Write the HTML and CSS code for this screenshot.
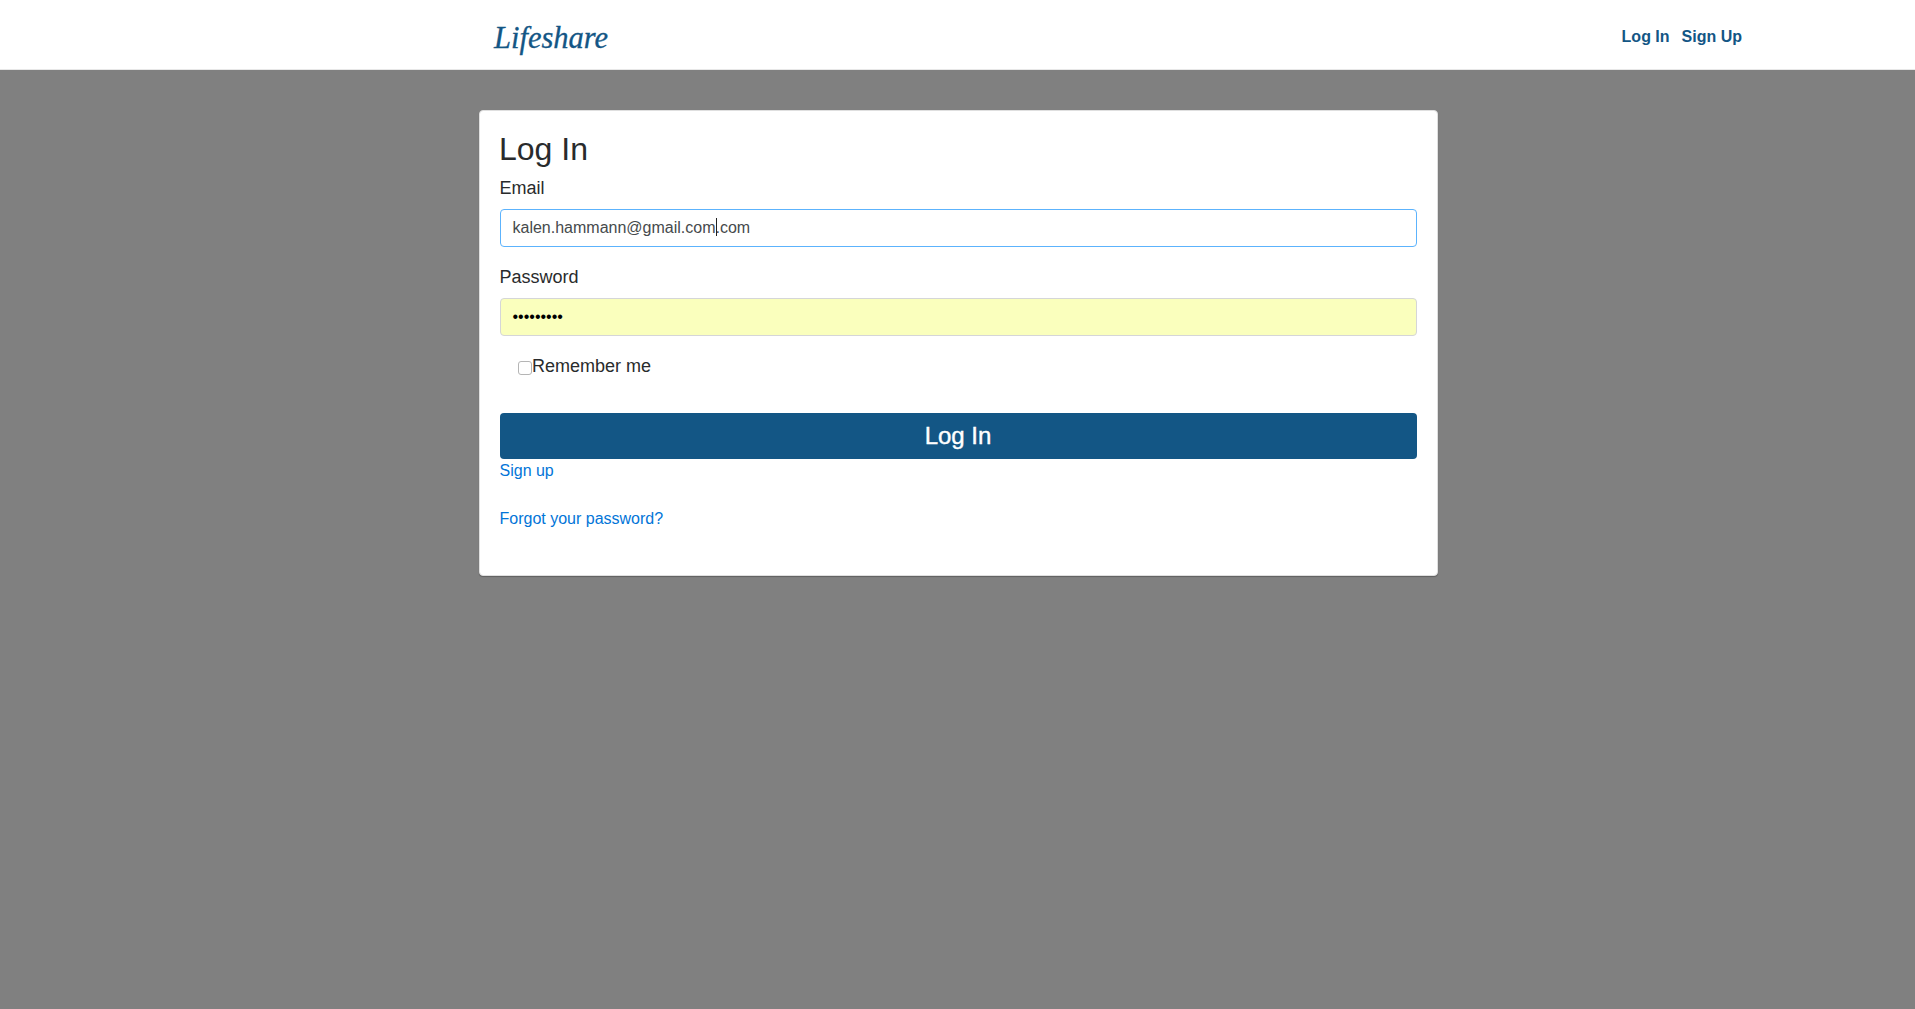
FILE: index.html
```html
<!DOCTYPE html>
<html lang="en">
<head>
<meta charset="utf-8">
<title>Lifeshare</title>
<link rel="stylesheet" href="styles.css">
</head>
<body>
<header class="navbar">
  <a class="brand" href="#">Lifeshare</a>
  <nav class="nav-links"><a href="#">Log In</a><a href="#">Sign Up</a></nav>
</header>
<main class="card">
  <h2 class="title">Log In</h2>
  <div class="label">Email</div>
  <div class="field field-focus" role="textbox"><span class="before-caret">kalen.hammann@gmail.com</span><span>.com</span></div>
  <div class="label">Password</div>
  <div class="field field-filled" role="textbox">•••••••••</div>
  <label class="remember"><input class="check" type="checkbox"><span>Remember me</span></label>
  <button class="submit">Log In</button>
  <a class="link" href="#">Sign up</a>
  <a class="link link-forgot" href="#">Forgot your password?</a>
</main>
</body>
</html>
```
FILE: styles.css
```css
* { box-sizing: border-box; }
body {
  margin: 0;
  min-height: 100vh;
  background: #808080;
  color: #292b2c;
  font: 16px/24px "Liberation Sans", Arial, sans-serif;
}
a { text-decoration: none; }
.navbar {
  height: 70px;
  padding: 0 173px 0 494px;
  display: flex;
  justify-content: space-between;
  align-items: center;
  background: #fff;
  border-bottom: 1px solid #e7e7e7;
}
.brand {
  color: #135685;
  font: italic 30.5px/40px "Apple Chancery", "URW Chancery L", "Liberation Serif", serif;
  padding-top: 6px;
  -webkit-text-stroke: .3px #135685;
}
.nav-links { display: flex; gap: 12px; padding-top: 4px; }
.nav-links a { color: #135685; font-weight: bold; }
.card {
  width: 959px;
  height: 466px;
  margin: 40px 0 0 479px;
  padding: 21px 20px 0;
  display: flex;
  flex-direction: column;
  background: #fff;
  border: 1px solid #dfdfdf;
  border-radius: 4px;
  box-shadow: 0 1px 1px rgba(0, 0, 0, .25);
}
.title { margin: 0 0 8px; font-size: 32px; line-height: 35px; font-weight: 400; text-indent: -1px; }
.label { height: 27px; margin-bottom: 7px; font-size: 18px; line-height: 27px; text-indent: -.5px; }
.field {
  height: 38px;
  margin-bottom: 17px;
  padding: 6px 12px;
  border: 1px solid #d5d6d8;
  border-radius: 4px;
  color: #464a4c;
  text-indent: -.5px;
}
.field-focus { border-color: #5cb3fd; }
.before-caret { position: relative; }
.before-caret::after {
  content: "";
  position: absolute;
  right: -1px;
  top: -1px;
  width: 1px;
  height: 18px;
  background: #222;
}
.field-filled { background: #faffbd; color: #000; }
.remember {
  height: 27px;
  padding-left: 18px;
  display: flex;
  font-size: 18px;
  line-height: 27px;
}
.check {
  appearance: none;
  width: 14px;
  height: 14px;
  margin: 8px 0 0;
  border: 1px solid #b5b5b5;
  border-radius: 3px;
  background: #fff;
}
.submit {
  height: 46px;
  margin: 33px 0 0;
  border: 0;
  border-radius: 4px;
  background: #135685;
  color: #fff;
  font: 24px/44px "Liberation Sans", Arial, sans-serif;
  text-indent: -1px;
  -webkit-text-stroke: .4px #fff;
}
.link { color: #0275d8; align-self: flex-start; text-indent: -.5px; }
.link-forgot { margin-top: 24px; }
```
